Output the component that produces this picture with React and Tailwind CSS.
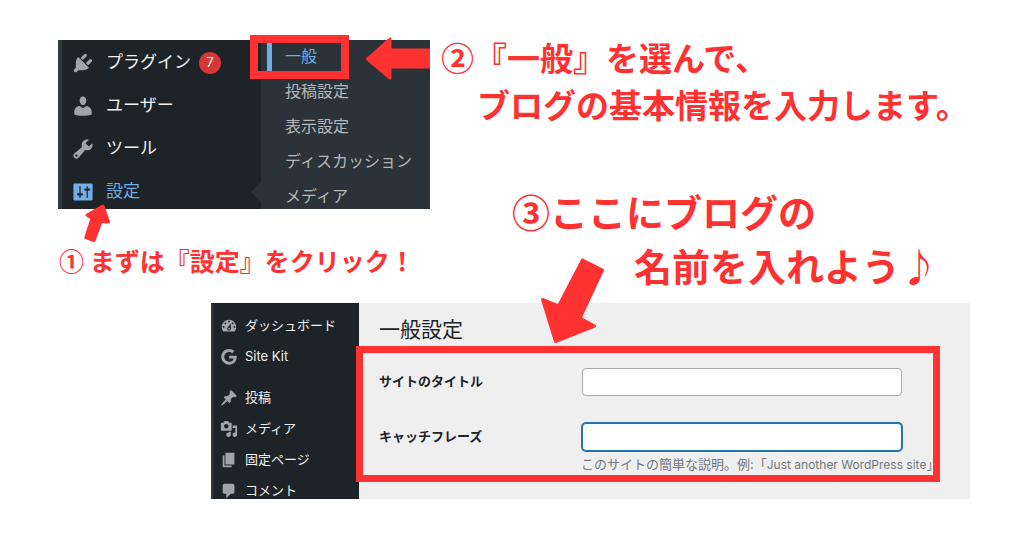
const ICONS = {
  plugins:
    "M13.11 4.36L9.87 7.6 8 5.73l3.24-3.24c.35-.34 1.05-.2 1.56.32.52.51.66 1.21.31 1.55zm-8 1.77l.91-1.12 9.01 9.01-1.19.84c-.71.71-2.63 1.16-3.82 1.16H6.14L4.9 17.26c-.59.59-1.54.59-2.12 0-.59-.58-.59-1.53 0-2.12l1.24-1.24v-3.88c0-1.13.4-3.19 1.09-3.89zm7.26 3.97l3.24-3.24c.34-.35 1.04-.21 1.55.31.52.51.66 1.21.31 1.55l-3.24 3.25z",
  users:
    "M10 9.25c-2.27 0-2.73-3.44-2.73-3.44C7 4.02 7.82 2 9.97 2c2.16 0 2.98 2.02 2.71 3.81 0 0-.41 3.44-2.68 3.44zm0 2.57L12.72 10c2.39 0 4.52 2.33 4.52 4.53v2.49s-3.65 1.13-7.24 1.13c-3.65 0-7.24-1.13-7.24-1.13v-2.49c0-2.25 1.94-4.48 4.47-4.48z",
  tools:
    "M16.68 9.77c-1.34 1.34-3.3 1.67-4.95.99l-5.41 6.52c-.99.99-2.59.99-3.58 0s-.99-2.59 0-3.57l6.52-5.42c-.68-1.65-.35-3.61.99-4.95 1.28-1.28 3.12-1.62 4.72-1.06l-2.89 2.89 2.82 2.82 2.86-2.87c.53 1.58.18 3.39-1.08 4.65zM3.81 16.21c.4.39 1.04.39 1.43 0 .4-.4.4-1.04 0-1.43-.39-.4-1.03-.4-1.43 0-.39.39-.39 1.03 0 1.43z",
  settings:
    "M18 16V4c0-.55-.45-1-1-1H3c-.55 0-1 .45-1 1v12c0 .55.45 1 1 1h14c.55 0 1-.45 1-1zM8 11h1c.55 0 1 .45 1 1s-.45 1-1 1H8v1.5c0 .28-.22.5-.5.5s-.5-.22-.5-.5V13H6c-.55 0-1-.45-1-1s.45-1 1-1h1V5.5c0-.28.22-.5.5-.5s.5.22.5.5V11zm5-2h-1c-.55 0-1-.45-1-1s.45-1 1-1h1V5.5c0-.28.22-.5.5-.5s.5.22.5.5V7h1c.55 0 1 .45 1 1s-.45 1-1 1h-1v5.5c0 .28-.22.5-.5.5s-.5-.22-.5-.5V9z",
  dashboard:
    "M3.76 16h12.48c1.1-1.37 1.76-3.11 1.76-5 0-4.42-3.58-8-8-8s-8 3.58-8 8c0 1.89.66 3.63 1.76 5zM10 4c.55 0 1 .45 1 1s-.45 1-1 1-1-.45-1-1 .45-1 1-1zM6 6c.55 0 1 .45 1 1s-.45 1-1 1-1-.45-1-1 .45-1 1-1zm8 0c.55 0 1 .45 1 1s-.45 1-1 1-1-.45-1-1 .45-1 1-1zm-5.37 5.55L12 7v6c0 1.1-.9 2-2 2s-2-.9-2-2c0-.57.24-1.08.63-1.45zM4 10c.55 0 1 .45 1 1s-.45 1-1 1-1-.45-1-1 .45-1 1-1zm12 0c.55 0 1 .45 1 1s-.45 1-1 1-1-.45-1-1 .45-1 1-1zm-5 3c0-.55-.45-1-1-1s-1 .45-1 1 .45 1 1 1 1-.45 1-1z",
  post:
    "M10.44 3.02l1.82-1.82 6.36 6.35-1.83 1.82c-1.05-.68-2.48-.57-3.41.36l-.75.75c-.92.93-1.04 2.35-.35 3.41l-1.83 1.82-2.41-2.41-2.8 2.79c-.42.42-3.38 2.71-3.8 2.29s1.86-3.39 2.28-3.81l2.79-2.79L4.1 9.36l1.83-1.82c1.05.69 2.48.57 3.4-.36l.75-.75c.93-.92 1.05-2.35.36-3.41z",
  media:
    "M13 11V4c0-.55-.45-1-1-1h-1.67L9 1H5L3.67 3H2c-.55 0-1 .45-1 1v7c0 .55.45 1 1 1h10c.55 0 1-.45 1-1zM7 4.5c1.38 0 2.5 1.12 2.5 2.5S8.38 9.5 7 9.5 4.5 8.38 4.5 7 5.62 4.5 7 4.5zM14 6h5v10.5c0 1.38-1.12 2.5-2.5 2.5S14 17.88 14 16.5s1.12-2.5 2.5-2.5c.17 0 .34.02.5.05V9h-3V6zm-4 8.05V13h2v3.5c0 1.38-1.12 2.5-2.5 2.5S7 17.88 7 16.5 8.12 14 9.5 14c.17 0 .34.02.5.05z",
  page: "M6 15V2h10v13H6zm-1 1h8v2H3V5h2v11z",
  comments:
    "M5 2h9c1.1 0 2 .9 2 2v7c0 1.1-.9 2-2 2h-2l-5 5v-5H5c-1.1 0-2-.9-2-2V4c0-1.1.9-2 2-2z",
};

function Icon({ name, className }) {
  if (name === "google") {
    return (
      <svg viewBox="-40 -24 568 568" className={className} fill="currentColor" aria-hidden="true">
        <path d="M488 261.8C488 403.3 391.1 504 248 504 110.8 504 0 393.2 0 256S110.8 8 248 8c66.8 0 123 24.5 166.3 64.9l-67.5 64.9C258.5 52.6 94.3 116.6 94.3 256c0 86.5 69.1 156.6 153.7 156.6 98.2 0 135-70.4 140.8-106.9H248v-85.3h236.1c2.3 12.7 3.9 24.9 3.9 41.4z" />
      </svg>
    );
  }
  return (
    <svg viewBox="0 0 20 20" className={className} fill="currentColor" fillRule="evenodd" aria-hidden="true">
      <path d={ICONS[name]} />
    </svg>
  );
}

function Arrow({ points, className, viewBox }) {
  return (
    <svg
      viewBox={viewBox}
      className={`absolute text-[#ff3131] ${className}`}
      fill="currentColor"
      stroke="currentColor"
      strokeWidth="3"
      strokeLinejoin="round"
      aria-hidden="true"
    >
      <polygon points={points} />
    </svg>
  );
}

const MENU = [
  { icon: "plugins", label: "プラグイン", badge: 7 },
  { icon: "users", label: "ユーザー" },
  { icon: "tools", label: "ツール" },
  { icon: "settings", label: "設定", active: true },
];

const SUBMENU = ["一般", "投稿設定", "表示設定", "ディスカッション", "メディア"];

const SIDEBAR = [
  { icon: "dashboard", label: "ダッシュボード" },
  { icon: "google", label: "Site Kit" },
  { icon: "post", label: "投稿", spaced: true },
  { icon: "media", label: "メディア" },
  { icon: "page", label: "固定ページ" },
  { icon: "comments", label: "コメント" },
];

function MenuPanel() {
  return (
    <div className="relative">
      <div className="flex h-[169px] overflow-hidden">
        <nav aria-label="メニュー" className="relative w-[203px] border-l-4 border-[#34393b] bg-[#1d2327] pt-px">
          <ul>
            {MENU.map((item) => (
              <li key={item.label}>
                <a
                  href="#"
                  className={`flex h-[43px] items-center pl-[9px] text-[17px] ${
                    item.active ? "text-[#72aee6]" : "text-[#f0f0f1]"
                  }`}
                >
                  <Icon
                    name={item.icon}
                    className={`mr-[11px] size-6 ${item.active ? "text-[#72aee6]" : "text-[#a0a5aa]"}`}
                  />
                  {item.label}
                  {item.badge && (
                    <span className="ml-2 flex size-[22px] items-center justify-center rounded-full bg-[#d63638] text-[13px] text-white">
                      {item.badge}
                    </span>
                  )}
                </a>
              </li>
            ))}
          </ul>
          <svg viewBox="0 0 10 20" className="absolute right-0 bottom-[7px] h-5 w-[10px] text-[#2c3338]" fill="currentColor" aria-hidden="true">
            <path d="M10 0v20L0 10z" />
          </svg>
        </nav>
        <nav aria-label="設定" className="flex-1 bg-[#2c3338]">
          <ul className="-mt-[2px]">
            {SUBMENU.map((label, i) => (
              <li key={label}>
                <a
                  href="#"
                  className={`relative flex h-[35px] items-center pl-6 text-[16px] ${
                    i === 0 ? "text-[#72aee6]" : "text-[#b4b8bb]"
                  }`}
                >
                  {i === 0 && <span className="absolute inset-y-0 left-[6px] w-[5px] bg-[#72aee6]" />}
                  {label}
                </a>
              </li>
            ))}
          </ul>
        </nav>
      </div>
      <div className="absolute -top-[5px] left-[192px] h-11 w-[99px] border-8 border-[#ff3131]" />
      <Arrow
        viewBox="0 0 66 44"
        className="-top-[3px] right-0 h-11 w-[66px]"
        points="3.5,22 26,2 26,13 64.5,13 64.5,30 26,30 26,41"
      />
      <Arrow
        viewBox="0 0 28 40"
        className="top-[163px] left-[26px] h-10 w-7"
        points="19,3 3,12 8,15.5 1.8,34.5 10,37.5 17,18.5 24.5,19"
      />
    </div>
  );
}

function SettingsPanel() {
  return (
    <section className="relative mt-[11px] mr-[54px] ml-[211px]">
      <div className="flex bg-[#efefef]">
        <nav aria-label="管理メニュー" className="h-[196px] w-[148px] shrink-0 overflow-hidden border-l-2 border-[#343b40] bg-[#1d2327] pt-[7px]">
          <ul>
            {SIDEBAR.map((item) => (
              <li key={item.label} className={item.spaced ? "mt-[10px]" : ""}>
                <a href="#" className="flex h-[31px] items-center pl-[7px] text-[13px] leading-[15px] text-[#f0f0f1]">
                  <Icon name={item.icon} className="mr-[7px] size-[18px] text-[#a0a5aa]" />
                  {item.label}
                </a>
              </li>
            ))}
          </ul>
        </nav>
        <form className="min-w-0 flex-1" onSubmit={(e) => e.preventDefault()}>
          <h1 className="pt-[11px] pl-[20px] text-[21px] leading-8 text-[#1d2327]">一般設定</h1>
          <div className="relative mr-[30px] -ml-[3px] h-[136px] overflow-hidden border-[7px] border-[#ff3131] pt-[15px] pl-[16px]">
            <div className="flex items-center">
              <label htmlFor="site-title" className="w-[203px] shrink-0 text-[13px] font-bold text-[#1d2327]">
                サイトのタイトル
              </label>
              <input id="site-title" type="text" className="h-7 w-80 rounded border border-[#a7aaad] bg-white px-2 text-[13px] outline-none" />
            </div>
            <div className="mt-[27px] flex items-center">
              <label htmlFor="tagline" className="w-[203px] shrink-0 text-[13px] font-bold text-[#1d2327]">
                キャッチフレーズ
              </label>
              <input
                id="tagline"
                type="text"
                aria-describedby="tagline-description"
                className="h-7 w-80 rounded border border-[#2271b1] bg-white px-2 text-[13px] ring-1 ring-[#2271b1] outline-none"
              />
            </div>
            <p id="tagline-description" className="mt-[3px] ml-[202px] text-[13px] leading-5 whitespace-nowrap text-[#72777c]">
              このサイトの簡単な説明。例:「<span className="text-[12px]">Just another WordPress site</span>」
            </p>
          </div>
        </form>
      </div>
      <Arrow
        viewBox="0 0 66 88"
        className="-top-[46px] left-[329px] h-[88px] w-[66px]"
        points="42.5,3 62.5,13 40,61 54.5,69 15.5,84.5 2.5,42.5 18.5,49"
      />
    </section>
  );
}

export default function App() {
  return (
    <main className="min-h-screen bg-white pt-[34px] pb-10 font-['Inter','Noto_Sans_CJK_JP',sans-serif]">
      <div className="flex pl-[58px]">
        <div className="w-[372px] shrink-0 pt-[6px]">
          <MenuPanel />
          <p className="mt-[35px] ml-[1px] text-[25px] leading-8 font-bold whitespace-nowrap text-[#ff3131] font-['Noto_Sans_CJK_JP',sans-serif]">
            ① まずは『設定』をクリック！
          </p>
        </div>
        <div className="font-bold whitespace-nowrap text-[#ff3131] font-['Noto_Sans_CJK_JP',sans-serif]">
          <p className="pl-[11px] text-[33px] leading-[47px]">
            ②『一般』を選んで、
            <span className="block pl-9">ブログの基本情報を入力します。</span>
          </p>
          <p className="mt-14 pl-[82px] text-[38px] leading-[54px]">
            ③ここにブログの
            <span className="block pl-[122px]">名前を入れよう♪</span>
          </p>
        </div>
      </div>
      <SettingsPanel />
    </main>
  );
}
